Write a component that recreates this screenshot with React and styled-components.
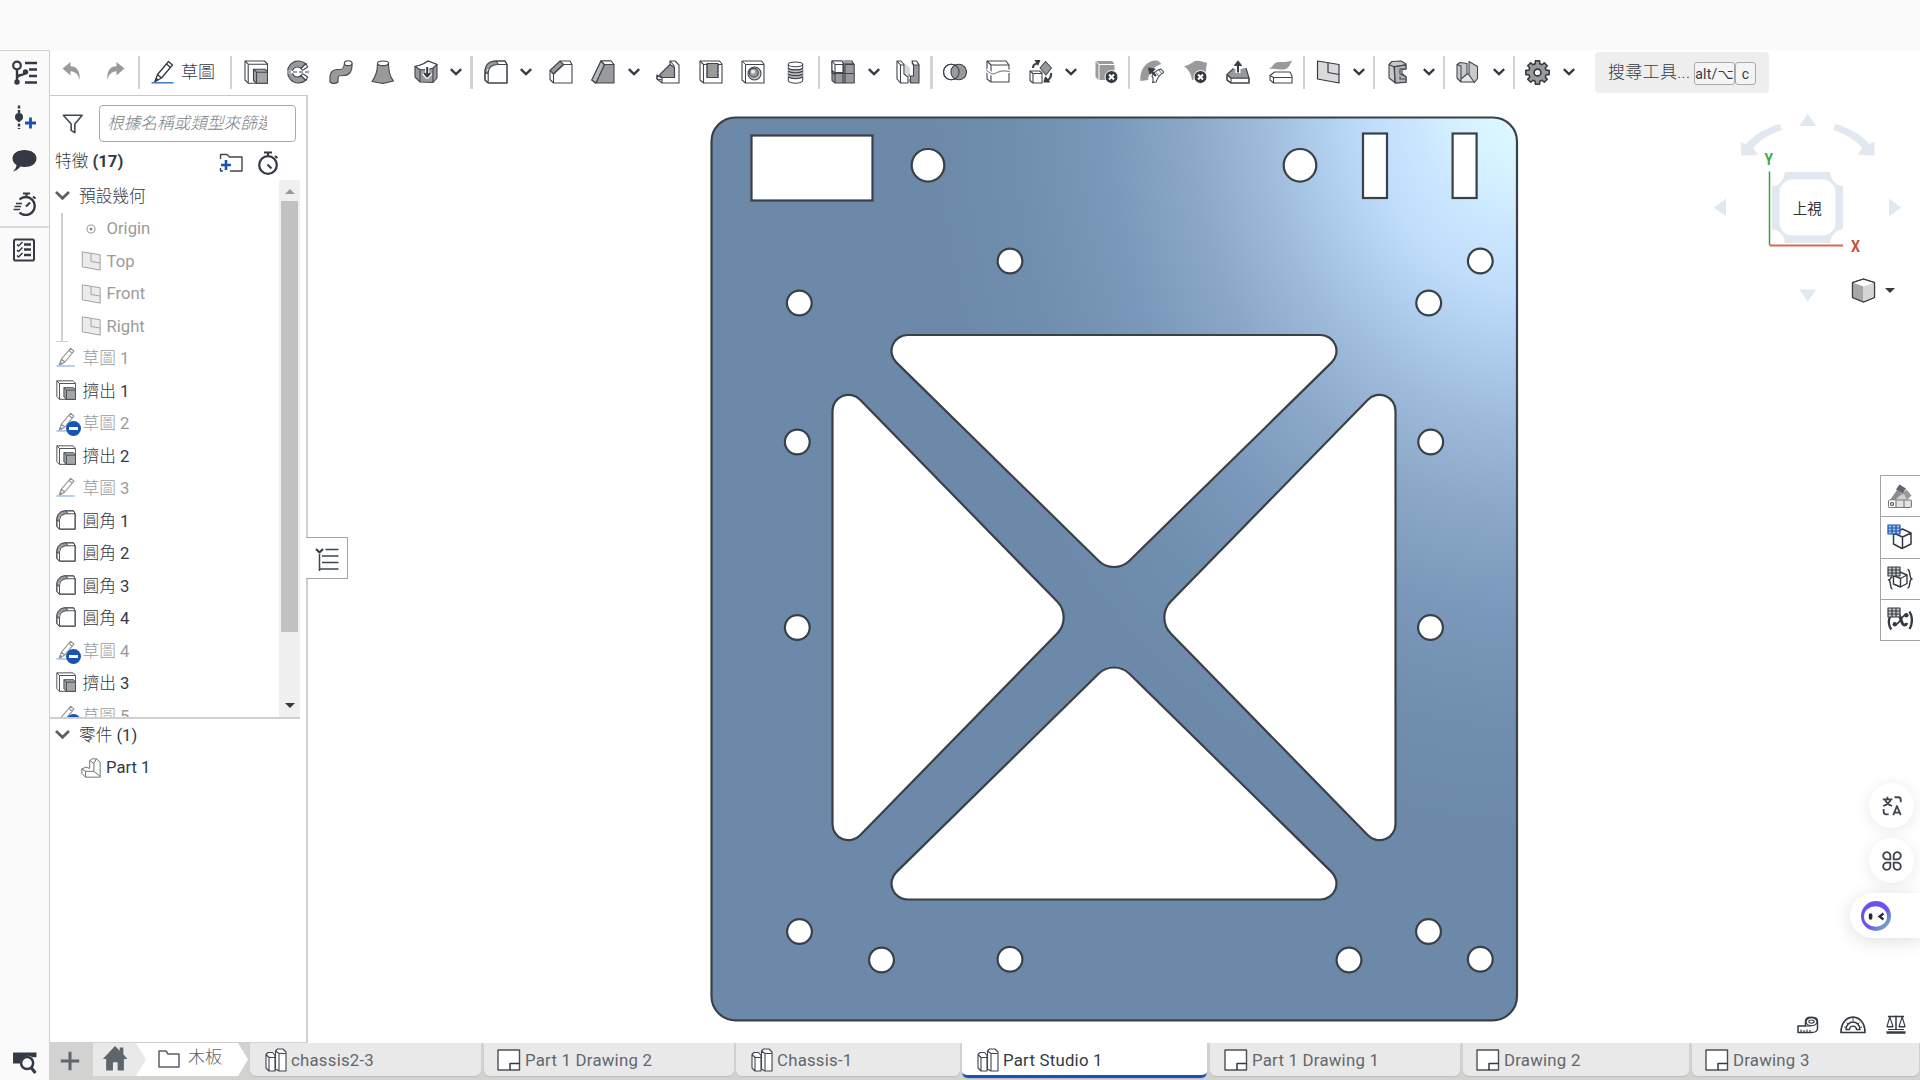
import React from "react";
import styled, { createGlobalStyle, css } from "styled-components";

const INK = "#333a44";
const MID = "#9a9a9a";
const LINE = "#d0d0d0";
const BLUE = "#1752b5";

const GlobalStyle = createGlobalStyle`
  * { box-sizing: border-box; }
  html, body, #root { height: 100%; }
  body {
    margin: 0;
    overflow: hidden;
    background: #fff;
    color: ${INK};
    font-family: Roboto, "Noto Sans CJK TC", sans-serif;
    font-size: 16.67px;
    font-weight: 400;
  }
`;

/* ---------- layout ---------- */

const Page = styled.div`
  display: flex;
  flex-direction: column;
  width: 1920px;
  height: 1080px;
  overflow: hidden;
`;

const TopStrip = styled.div`
  flex: none;
  height: 50px;
  background: #fafafa;
`;

const Body = styled.div`
  display: flex;
  flex: 1;
  min-height: 0;
`;

const Rail = styled.nav`
  display: flex;
  flex-direction: column;
  flex: none;
  width: 50px;
  border-top: 1px solid ${LINE};
  border-right: 1px solid ${LINE};
  background: #fafafa;
`;

const RailButton = styled.div`
  display: flex;
  align-items: center;
  justify-content: center;
  height: ${(p) => p.$h || 44}px;
  padding-right: ${(p) => p.$shift || 0}px;
  padding-bottom: 1px;
  margin-top: ${(p) => p.$push || "0"};
`;

const RailRule = styled.div`
  height: 2px;
  background: #dcdcdc;
`;

const Main = styled.div`
  display: flex;
  flex-direction: column;
  flex: 1;
  min-width: 0;
`;

const Toolbar = styled.div`
  display: flex;
  align-items: center;
  flex: none;
  height: 45px;
  padding-bottom: 1px;
`;

const Tool = styled.div`
  display: flex;
  flex: none;
  width: ${(p) => p.$w || 24}px;
  margin-left: ${(p) => p.$gap}px;
`;

const Divider = styled.div`
  flex: none;
  width: ${(p) => p.$w || 2}px;
  height: 33px;
  margin-left: ${(p) => p.$gap}px;
  background: #d3d3d3;
`;

const ToolLabel = styled.span`
  flex: none;
  width: 34px;
  margin-left: 6px;
  font-size: 17px;
  font-weight: 300;
  line-height: 24px;
  padding-bottom: 1px;
`;

const SearchBox = styled.div`
  display: flex;
  align-items: center;
  flex: none;
  width: 174px;
  height: 41px;
  margin-left: 20px;
  padding-left: 13px;
  border-radius: 4px;
  background: #eee;
  font-size: 17px;
  font-weight: 300;
`;

const SearchText = styled.span`
  width: 86px;
  white-space: nowrap;
  letter-spacing: 0.3px;
  line-height: 24px;
  padding-bottom: 1px;
`;

const Key = styled.kbd`
  display: flex;
  align-items: center;
  justify-content: center;
  width: ${(p) => p.$w}px;
  height: 23px;
  margin-top: 3px;
  border: 1px solid #aaa;
  border-radius: 3px;
  background: #f4f4f4;
  font-family: Roboto, "DejaVu Sans", sans-serif;
  font-size: 14px;
  font-weight: 400;
  letter-spacing: 0.2px;
`;

const Workspace = styled.div`
  display: flex;
  flex: 1;
  min-height: 0;
`;

const Panel = styled.aside`
  display: flex;
  flex-direction: column;
  flex: none;
  width: 258px;
  border-top: 1px solid #c8c8c8;
  border-right: 2px solid ${LINE};
  border-bottom: 1px solid ${LINE};
`;

const FilterRow = styled.div`
  display: flex;
  align-items: center;
  height: 47px;
  margin-top: 4px;
  padding-left: 12px;
  gap: 15px;
`;

const FilterInput = styled.div`
  width: 197px;
  height: 37px;
  padding: 0 28px 0 7px;
  border: 1px solid #a9a9a9;
  border-radius: 4px;
`;

const Placeholder = styled.div`
  overflow: hidden;
  white-space: nowrap;
  color: #7b7f85;
  font-style: italic;
  font-weight: 300;
  line-height: 35px;
`;

const HeadRow = styled.div`
  display: flex;
  align-items: center;
  height: 33px;
  padding: 0 26px 2px 5px;
  font-weight: 700;
`;

const HeadTitle = styled.span`
  flex: 1;
  line-height: 30px;
  padding-bottom: 2px;
  & > span { font-weight: 300; }
`;

const HeadIcon = styled.span`
  display: flex;
  margin-left: ${(p) => p.$gap || 0}px;
`;

const TreeArea = styled.div`
  display: flex;
  flex: none;
  width: 250px;
  height: 539px;
  border-bottom: 2px solid ${LINE};
`;

const TreeList = styled.div`
  flex: 1;
  overflow: hidden;
`;

const Group = styled.div`
  height: 129.5px;
  margin-left: 11px;
  border-left: 2px solid ${LINE};
  position: relative;
  &::after {
    content: "";
    position: absolute;
    left: -7px;
    bottom: 0;
    width: 12px;
    height: 1px;
    background: ${LINE};
  }
`;

const Row = styled.div`
  display: flex;
  align-items: center;
  height: 32.5px;
  padding-left: ${(p) => p.$indent || 5.5}px;
  padding-bottom: ${(p) => (p.$latin ? 0 : 2)}px;
  gap: ${(p) => p.$gap || 6}px;
  color: ${(p) => (p.$dim ? "#9b9b9b" : INK)};
  font-weight: ${(p) => (p.$latin ? 400 : 300)};
  white-space: nowrap;
`;

const Digits = styled.span`
  font-weight: 400;
`;

const IconSlot = styled.span`
  display: flex;
  align-items: center;
  justify-content: center;
  position: relative;
  width: 21px;
  height: 22px;
`;

const Minus = styled.span`
  position: absolute;
  left: 10px;
  top: 10px;
  width: 15px;
  height: 15px;
  border-radius: 50%;
  background: ${BLUE};
  &::after {
    content: "";
    position: absolute;
    left: 3px;
    top: 6px;
    width: 9px;
    height: 3px;
    background: #fff;
  }
`;

const ScrollTrack = styled.div`
  display: flex;
  flex-direction: column;
  align-items: center;
  width: 21px;
  background: #f0f0f0;
`;

const ScrollThumb = styled.div`
  width: 17px;
  height: 431px;
  background: #c1c1c1;
`;

const Arrow = styled.div`
  width: 0;
  height: 0;
  border-left: 5px solid transparent;
  border-right: 5px solid transparent;
  ${(p) =>
    p.$up
      ? css`margin: 9px 0 7px; border-bottom: 5px solid #9a9a9a;`
      : css`margin-top: ${p.$mt || 0}px; border-top: 5px solid ${INK};`}
`;

const PartsArea = styled.div`
  flex: 1;
`;

const Viewport = styled.main`
  position: relative;
  flex: 1;
  min-width: 0;
  margin-top: 1px;
`;

const ModelSvg = styled.svg`
  display: block;
`;

const Flyout = styled.div`
  position: absolute;
  left: -2px;
  top: 441px;
  display: flex;
  align-items: center;
  justify-content: center;
  width: 42px;
  height: 42px;
  padding: 1px 0 0 0;
  border: 1px solid #a3a3a3;
  border-left: none;
  background: #fff;
`;

const CubeWrap = styled.div`
  position: absolute;
  right: 10px;
  top: 10px;
`;

const SideDock = styled.div`
  position: absolute;
  right: 0;
  top: 379px;
  width: 40px;
  border: 1px solid #a3a3a3;
  border-right: none;
  background: #fff;
`;

const DockButton = styled.div`
  display: flex;
  align-items: center;
  padding-left: 6px;
  height: 41.25px;
  &:first-child { height: 40.25px; }
  & + & { border-top: 1px solid #a3a3a3; }
`;

const FloatStack = styled.div`
  position: absolute;
  right: 0;
  top: 687px;
  display: flex;
  flex-direction: column;
  align-items: flex-end;
`;

const RoundButton = styled.div`
  display: flex;
  align-items: center;
  justify-content: center;
  width: 45px;
  height: 45px;
  margin: 0 6px 10px 0;
  border-radius: 50%;
  background: #fff;
  box-shadow: 0 2px 16px rgba(0, 0, 0, 0.09);
`;

const Pill = styled.div`
  display: flex;
  align-items: center;
  width: 70px;
  height: 45px;
  padding-left: 11px;
  border-radius: 23px 0 0 23px;
  background: #fff;
  box-shadow: 0 3px 18px rgba(0, 0, 0, 0.13);
`;

const Measures = styled.div`
  position: absolute;
  right: 14px;
  bottom: 9px;
  display: flex;
  gap: 20.5px;
  align-items: center;
`;

const TabBar = styled.footer`
  display: flex;
  flex: none;
  height: 37px;
  background: #d2d2d1;
`;

const AddTab = styled.div`
  display: flex;
  align-items: center;
  justify-content: center;
  width: 43px;
  padding: 0 3px 1px 0;
`;

const Crumb = styled.div`
  display: flex;
  align-items: center;
  height: 33px;
  width: ${(p) => p.$w}px;
  margin-left: ${(p) => p.$ml || 0}px;
  padding-left: ${(p) => p.$pl}px;
  padding-bottom: 2px;
  gap: 8px;
  background: ${(p) => p.$bg};
  clip-path: ${(p) =>
    p.$notch
      ? "polygon(0 0, calc(100% - 10px) 0, 100% 50%, calc(100% - 10px) 100%, 0 100%, 10px 50%)"
      : "polygon(0 0, 100% 0, 100% 100%, 0 100%)"};
  color: #5b6068;
  font-size: 17px;
  font-weight: 300;
`;

const CrumbText = styled.span`
  line-height: 24px;
  padding-bottom: 3px;
`;

const Tab = styled.div`
  display: flex;
  align-items: center;
  flex: none;
  width: ${(p) => p.$w}px;
  height: ${(p) => (p.$active ? 35 : 33)}px;
  margin-left: ${(p) => p.$gap}px;
  padding-left: ${(p) => p.$pl || 13}px;
  padding-top: ${(p) => (p.$active ? 1 : 0)}px;
  gap: 4px;
  border-radius: 0 0 6px 6px;
  border-bottom: ${(p) => (p.$active ? `3px solid ${BLUE}` : "none")};
  background: ${(p) => (p.$active ? "#fff" : "#e9e9e9")};
  box-shadow: 0 1px 1px #bdbdbd;
  color: ${(p) => (p.$active ? INK : "#62676d")};
  font-size: 16.8px;
  letter-spacing: 0.23px;
  white-space: nowrap;
`;

const TabText = styled.span`
  padding-top: 1px;
`;

/* ---------- icons ---------- */

const Svg = ({ s = 24, h, vb = "0 0 24 24", children }) => (
  <svg
    width={s}
    height={h || s}
    viewBox={vb}
    fill="none"
    stroke="#3f4650"
    strokeWidth="1.1"
    strokeLinejoin="round"
    style={{ display: "block", flex: "none" }}
  >
    {children}
  </svg>
);

const Undo = () => (
  <Svg>
    <path d="M2.5 8.5 10.5 2v4.3c6.500 0 9.500 4.500 9.300 13.700C18 14.500 15.500 11.500 10.500 11.300V15.500z" fill={MID} stroke="none" />
  </Svg>
);
const Redo = () => (
  <Svg>
    <path d="M20.500 8.500 12.500 2v4.300C6 6.300 3 10.800 3.200 20 5 14.500 7.500 11.500 12.500 11.300V15.500z" fill={MID} stroke="none" />
  </Svg>
);
const Sketch = ({ s, dim }) => (
  <Svg s={s}>
    <g stroke={dim ? "#909090" : INK} strokeWidth="1.3">
      <path d="M4 21.500 6.500 14.500 17.500 1.500 21.500 5 10.500 18z M6.500 14.500l4 3.500 M15.500 4l4 3.500" fill="#fff" />
      <path d="M4 21.500l3-1.500-1.700-1.500z" fill={dim ? "#909090" : INK} />
    </g>
    <path d="M.5 22.800H22.500" stroke={dim ? "#8fb4dc" : "#3f78bd"} strokeWidth="1.500" />
  </Svg>
);
const Extrude = ({ s }) => (
  <Svg s={s}>
    <path d="M1 1H20.500L23.500 4V23.200H4.200L1 20z" fill="#fff" />
    <path d="M1 1l3.200 3.200H23.500M4.200 4.200V23.200" />
    <path d="M9.500 9.200H21l2.500 2.500V23.200H12.500L9.500 20.500z" fill="#a6a6a6" />
    <path d="M9.500 9.200l3 3H23.500M12.500 12.200V23.200" />
  </Svg>
);
const Revolve = () => (
  <Svg>
    <path d="M19.500 3.500A11 11 0 1 0 19.500 20.500L15 15.500A5 5 0 1 1 15 8.500z" fill={MID} />
    <path d="M15 8.500l5-5 1.500 3.500-5 3.500zM15 15.500l5 5 1.500-3.500-5-3.500z" fill="#fff" />
    <path d="M1 12H23.500" stroke="#fff" strokeWidth="2.600" />
    <path d="M1 12H23.500" strokeDasharray="4 2" />
  </Svg>
);
const Sweep = () => (
  <Svg>
    <path d="M1 18c0-7 4-9 9-8.500 4 .3 5-2 5.500-6.500l7.500.5c.5 7-2 12-8.500 12-4.500 0-5 0-5.500 3v3.500c-2 2-6 2-8 0z" fill={MID} />
    <ellipse cx="19.200" cy="3.200" rx="3.800" ry="2.400" fill="#fff" />
  </Svg>
);
const Loft = () => (
  <Svg>
    <path d="M6.500 3.500C6.500 12 4.500 17 1 21.500L12 23.500 22.500 21C19 17 17.500 11 17.500 3.500z" fill={MID} />
    <ellipse cx="12" cy="3.300" rx="5.500" ry="2.300" fill="#fff" />
  </Svg>
);
const Thicken = () => (
  <Svg>
    <path d="M1 6.500C6 5.500 11 3.500 14 1l9 3.500V18L19 22.500 6 22 1 17z" fill={MID} />
    <path d="M1 6.500C6 5.500 11 3.500 14 1l9 3.500-4 3.500C14 10 10 10 6 9.500z" fill="#fff" />
    <path d="M6 9.500V22M19 8V22.500" />
    <path d="M13.200 8v8.500M9.500 12.800l3.700 4 3.700-4" stroke="#fff" strokeWidth="4" />
    <path d="M13.200 7v9M10 12.800l3.200 3.700 3.200-3.700" strokeWidth="2" stroke={INK} />
  </Svg>
);
const Fillet = ({ s }) => (
  <Svg s={s}>
    <path d="M12 1h9l2 3.500V23H4.200L1 20V12C1 5 5 1 12 1z" fill="#fff" />
    <path d="M1 12C1 5 5 1 12 1l2.500 3.500C8 4.500 4.200 7 4.200 14z" fill={MID} stroke="none" />
    <path d="M3.500 9.500l3 2" stroke="#fff" strokeWidth="2" />
    <path d="M12 1C5 1 1 5 1 12v8l3.200 3H23V4.500L21 1zM4.200 23V14C4.200 7 8 4.500 14.500 4.500H23M12 1l2.500 3.500M1 12l3.200 2" />
  </Svg>
);
const Chamfer = () => (
  <Svg>
    <path d="M1 10.500 11 1l3.500 3.500L4.500 14z" fill={MID} />
    <path d="M11 1h10l2 3.500V23H4.500L1 19.500V10.500M4.500 23V14l10-9.500H23" />
  </Svg>
);
const Draft = () => (
  <Svg>
    <path d="M10 1H20l3 3.500V23H4.500L.8 20z" fill={MID} />
    <path d="M10 1l3.500 3.500L5 23 .8 20z" fill="#b8b8b8" />
    <path d="M10 1H20l3 3.500H13.500z" fill="#fff" />
    <path d="M13.500 4.500 5 23" strokeDasharray="2 1.500" />
  </Svg>
);
const Rib = () => (
  <Svg>
    <path d="M1 15l4 2.500h3L18 8V5.500L14 1h5l4 4V23H6l-5-4z" fill="#fff" />
    <path d="M3.500 15 14 4.500l4.500 3V17.500H6z" fill={MID} />
    <path d="M14 1v4M1 15v4l5 1M6 17.500V23M18.500 7.500V17.500" />
  </Svg>
);
const Shell = () => (
  <Svg>
    <path d="M1 1H20.500L23 4V23H4.500L1 20z" fill="#fff" />
    <path d="M1 1l3.500 3.500V23M4.500 4.500H23" />
    <path d="M8 3.500H19V17.500H8z" fill={MID} />
    <path d="M8 3.500V17.500H19V3.500" strokeDasharray="2 1" />
  </Svg>
);
const Hole = () => (
  <Svg>
    <path d="M1 1H20.500L23 4V23H4.500L1 20z" fill="#fff" />
    <path d="M1 1l3.500 3.500V23M4.500 4.500H23" strokeWidth="1" />
    <circle cx="13.500" cy="13.500" r="6.500" fill="#c9c9c9" />
    <circle cx="12.800" cy="12.800" r="4.500" fill={MID} />
    <circle cx="12" cy="11.800" r="2" fill="#eee" stroke="none" />
  </Svg>
);
const Thread = () => (
  <Svg s={23}>
    <path d="M4.500 3.500v17c2 3.500 13 3.500 15 0v-17" fill="#fff" />
    <path d="M4.500 8v8.500c2 3 13 3 15 0V8z" fill="#c4c4c4" stroke="none" />
    <ellipse cx="12" cy="3.500" rx="7.500" ry="2.500" fill="#fff" />
    <path d="M4.500 7.500c3 2.500 12 2.500 15 0M4.500 10.500c3 2.500 12 2.500 15 0M4.500 13.500c3 2.500 12 2.500 15 0M4.500 16.500c3 2.500 12 2.500 15 0" strokeWidth="1.300" />
  </Svg>
);
const Pattern = () => (
  <Svg>
    <path d="M1 1H10.500l2 2H21.500l1.700 2.500V23H4L1 20.500z" fill={MID} />
    <path d="M1 1h10l1.500 3v8.500H3.500L1 10.500z" fill="#fff" />
    <path d="M1 1l3 3.500h8.500M4 4.500V12M12.500 1H21l2.200 3.500H14V23M1 10.500V13l3 .5h19M4 13V23M1 13l3 1.500M12 4V23" />
  </Svg>
);
const Mirror = () => (
  <Svg>
    <path d="M1 1h4l3 3.500V14l4 3V23H4.500L1 19z" fill="#fff" />
    <path d="M1 1l3.500 4V23M4.500 5H8" />
    <path d="M7 1l7 7v9l-5-3.500V4z" fill="#d9d9d9" stroke="none" />
    <path d="M16 3h5.500L23 5V23H14.500V16H17.500V5z" fill={MID} />
    <path d="M16 1h4.500L23 5h-5.500z" fill="#fff" />
    <path d="M13.200 14V24" strokeDasharray="3 2" stroke="#777" />
  </Svg>
);
const Boolean_ = () => (
  <Svg>
    <circle cx="8.300" cy="12" r="7.800" fill="#fff" />
    <circle cx="15.700" cy="12" r="7.800" fill={MID} />
    <circle cx="8.300" cy="12" r="7.800" />
  </Svg>
);
const Split = () => (
  <Svg>
    <path d="M1 1H20l3 4V22H5l-4-3z" fill="#fff" />
    <path d="M1 1l4 4H23M5 5V22" />
    <path d="M0 9.500c4 5 8 5 11 3 4-2.500 8-2 13-1" stroke="#fff" strokeWidth="3.500" />
    <path d="M0 9.500c4 5 8 5 11 3 4-2.500 8-2 13-1" stroke="#888" />
  </Svg>
);
const Transform = () => (
  <Svg>
    <path d="M1 11h9.500l2.500 2V23H4l-3-2.500z" fill="#fff" />
    <path d="M1 11l3 2.500h9M4 13.500V23" />
    <path d="M16.500 1.500 22.500 8 17 15 11 8z" fill={MID} />
    <path d="M4 8C4 5 5 4 8 3.500" strokeWidth="2.200" />
    <path d="M5.500 0h6L9 6z" fill={INK} stroke="none" />
    <path d="M22 13c.5 4-1 6-4 7.500" strokeWidth="2.200" />
    <path d="M15 22l1.500-5 4 5z" fill={INK} stroke={INK} />
  </Svg>
);
const CrossBadge = () => (
  <g>
    <circle cx="16.500" cy="17" r="6.500" fill={INK} stroke="#fff" strokeWidth="1" />
    <path d="M14 14.500l5 5M19 14.500l-5 5" stroke="#fff" strokeWidth="2" />
  </g>
);
const DeletePart = () => (
  <Svg>
    <path d="M.5 1H17l2.500 3V20H3.500L.5 17z" fill={MID} stroke="none" />
    <path d="M.5 1l3.500 3.500H20M4 4.500V21" stroke="#fff" strokeWidth="1" />
    <CrossBadge />
  </Svg>
);
const ModifyFillet = () => (
  <Svg>
    <path d="M.5 21C-1 9 8-1 18 .8L21.500 4C14 6 9 12 8 20z" fill={MID} stroke="none" />
    <path d="M12 16c2-4 5-6 9-7l3 3.500c-4 1.500-6 4-8 9.500l-3.500.5c1-2 1-4-.5-6.500z" fill="#fff" />
    <path d="M16 12.500l3 4M19 10l3 4" strokeWidth=".8" />
    <path d="M16 16 11 11" strokeWidth="2.200" stroke={INK} />
    <path d="M8.500 8l6.500 1-5 5z" fill={INK} />
  </Svg>
);
const DeleteFace = () => (
  <Svg>
    <path d="M0 6C5 6 8 2 12 .8c4-.5 7 1 11 2L21 16 8 20C7 13 4 9 0 6z" fill={MID} stroke="none" />
    <CrossBadge />
  </Svg>
);
const MoveFace = () => (
  <Svg>
    <path d="M1 14.500 5 18H23V23H5l-4-3z" fill="#fff" />
    <path d="M1 14.500 7.500 8.500C11 10.500 16 8 20 8l3 8.500-3 1.500H5z" fill={MID} stroke="none" />
    <path d="M7.500 8.500 1 14.500 5 18H23L20 8M1 14.500V20l4 3V18M5 23H23V18" />
    <path d="M12 13V3.500" stroke="#fff" strokeWidth="5" />
    <path d="M12 12.500V3" strokeWidth="2" stroke={INK} />
    <path d="M8.500 5.500 12 1l3.500 4.500z" fill={INK} />
  </Svg>
);
const ReplaceFace = () => (
  <Svg>
    <path d="M0 9C4 7 4 3 9 2c5 0 8 .5 14-1.500-2 4-3 8-8 9C10 10 6 8 0 9z" fill={MID} stroke="none" />
    <path d="M1 15.500 5.500 12H21l2 4V23H4.500L1 20z" fill="#fff" />
    <path d="M1 15.500 4.500 17.500H23M4.500 17.500V23" />
  </Svg>
);
const Plane = ({ s, dim }) => (
  <Svg s={s}>
    <g stroke={dim ? "#9b9b9b" : INK} strokeWidth={dim ? 1.1 : 1.2}>
      <path d="M1.500 1 23 4.500V23L1.500 19z" fill={dim ? "#ebebeb" : "#dadada"} />
      <path d="M12 3V12.500L23 14.500" />
    </g>
  </Svg>
);
const Frame = () => (
  <Svg>
    <path d="M3 4.500 6 1.500 15 1l5 3V9l-4 .5v4L20 17v5.500L9.500 23 3 18z" fill="#c9c9c9" />
    <path d="M8 6.500 20 5V9h-6v5l6 2.500V22L9 23z" fill="#b3b3b3" />
    <path d="M3 4.500 8.500 7 20 4.500M8.500 7 9 23M14 16.500V19H20" />
  </Svg>
);
const SheetMetal = () => (
  <Svg>
    <path d="M2 4.500 5 2.500l7 1V14L23 12V18l-3.500 4.500L6 22 2 18z" fill="#c9c9c9" stroke="none" />
    <path d="M12 14 6 18.500V22H19.500V18z" fill="#e6e6e6" stroke="none" />
    <path d="M14 1.500 22.500 6.500V18.500L19.500 22.500 14 15z" fill="#c9c9c9" />
    <path d="M2 4.500 5 2.500l7 1V14L6 19V6zM2 4.500V18L6 22H19.500M6 19v3M12 14h2" />
  </Svg>
);
const Gear = () => {
  const pts = [];
  for (let i = 0; i < 8; i++) {
    const a = (i * Math.PI) / 4;
    [[-0.26, 8.6], [-0.18, 11.4], [0.18, 11.4], [0.26, 8.6]].forEach(([d, r]) =>
      pts.push(`${(12 + Math.sin(a + d) * r).toFixed(2)},${(12 - Math.cos(a + d) * r).toFixed(2)}`)
    );
  }
  return (
    <Svg s={25}>
      <polygon points={pts.join(" ")} fill={MID} strokeWidth="1.500" stroke={INK} />
      <circle cx="12" cy="12" r="3.300" fill="#fff" strokeWidth="1.600" stroke={INK} />
    </Svg>
  );
};
const ChevronIcon = ({ w = 12, c = INK, sw = 2.4 }) => (
  <svg width={w} height={w} viewBox="0 0 12 12" fill="none" stroke={c} strokeWidth={sw} style={{ display: "block", flex: "none" }}>
    <path d="M.8 3.200 6 8.200 11.200 3.200" />
  </svg>
);
const TreeIcon = () => (
  <Svg s={26} vb="0 0 26 26">
    <g strokeWidth="2.200" stroke={INK}>
      <circle cx="5" cy="5.500" r="3.800" />
      <path d="M5 9.500V20M5 18c0-5 8-1 8.500-6" strokeWidth="2.400" />
      <path d="M13 3H25M17 9.500h8M17 16h8M13 22.500H25" strokeWidth="2.400" />
    </g>
    <circle cx="5" cy="22" r="2.700" fill={INK} stroke="none" />
    <circle cx="13.500" cy="12" r="2.700" fill={INK} stroke="none" />
  </Svg>
);
const InsertPoint = () => (
  <Svg>
    <path d="M6 .5V24" strokeWidth="2.400" strokeDasharray="3 1.500" stroke={INK} />
    <circle cx="6" cy="12" r="4" fill={INK} stroke="none" />
    <path d="M17.500 12.500v11M12 18H23" stroke={BLUE} strokeWidth="2.800" />
  </Svg>
);
const Comment = () => (
  <Svg s={25} h={22} vb="0 0 25 22">
    <path d="M12.500 0C19.500 0 24.500 3.500 24.500 8.500S19.500 17 12.500 17c-1.500 0-3 0-4-.4C6.500 19 4 21 .8 21.500 3 19.500 4.300 17.500 4.500 15 2 13.500.5 11.300.5 8.500.5 3.500 5.500 0 12.500 0z" fill={INK} stroke="none" />
  </Svg>
);
const FastWatch = () => (
  <Svg>
    <g stroke={INK}>
      <path d="M6.500 7.500A9 9 0 1 1 6.500 20.500" strokeWidth="2.400" />
      <path d="M10 1.500h7M13.500 1.500V5M20 4.500l2.500 2M13 14.500l4-4" strokeWidth="2" />
      <path d="M3 11.500H9M1.500 14.500H8M.5 17.500H7" strokeWidth="1.400" />
    </g>
  </Svg>
);
const Watch = () => (
  <Svg>
    <g stroke={INK}>
      <circle cx="12" cy="14" r="8.800" strokeWidth="2.300" />
      <path d="M8 1.500h8M12 1.500V5M19 5l2.500 2M11.500 13.500l4 4" strokeWidth="2" />
    </g>
  </Svg>
);
const Checklist = () => (
  <Svg>
    <g stroke={INK}>
      <rect x="2" y="1.500" width="20" height="21" rx="1.500" strokeWidth="2" />
      <path d="M12 6.500h7M12 11.500h7M12 17h7" strokeWidth="2.400" />
      <path d="M5 6.500l1.500 1.500 4-4M5 12l1.500 1.500 4-4M5 17.500 6.500 19l4-4" strokeWidth="1.500" />
    </g>
  </Svg>
);
const ScreenSearch = () => (
  <Svg s={25}>
    <path d="M1 2.500H23.500V7H20A8 8 0 0 0 7.500 13H1z" fill={INK} stroke="none" />
    <circle cx="14.500" cy="12.500" r="5.800" strokeWidth="2.400" fill="#fafafa" stroke={INK} />
    <path d="M18.500 17l4 5" strokeWidth="3" stroke={INK} />
  </Svg>
);
const Funnel = () => (
  <Svg s={22}>
    <path d="M1.500 2.500H22L14 12v9.500L10 19V12z" strokeWidth="1.700" />
  </Svg>
);
const FolderPlus = () => (
  <Svg s={24} h={22} vb="0 0 24 22">
    <path d="M1.500 7V2.500H8l2.500 2.500H23V19H11M4 19H1.500V16" strokeWidth="1.400" />
    <path d="M7 8v10M2 13H12" stroke={BLUE} strokeWidth="2.600" />
  </Svg>
);
const OriginIcon = () => (
  <Svg s={18} vb="0 0 18 18">
    <circle cx="9" cy="9" r="4" stroke="#9b9b9b" />
    <circle cx="9" cy="9" r="1.500" fill="#8b8b8b" stroke="none" />
  </Svg>
);
const PartIcon = () => (
  <Svg s={20}>
    <g stroke="#62676d">
      <path d="M10.500 3 13.500 1H18.500L23 5V23H5.500L1 18.500V13L6 11l4.500 1.500z" fill="#fff" />
      <path d="M10.500 3 15.500 6.500V16H5.500V23M1 13l4.500 3M15.500 6.500 18.500 1M15.500 16 23 22" />
    </g>
  </Svg>
);
const FlyIcon = () => (
  <Svg s={24}>
    <path d="M1 2l3.500 3.500L8 2" strokeWidth="2" stroke={INK} />
    <path d="M10.500 2.500h13M7 9h16.500M7 15.500h16.500M5 22h18.500M4.500 7V24" strokeWidth="1.500" />
  </Svg>
);
const Plus = () => (
  <Svg s={20} vb="0 0 20 20">
    <path d="M10 .8V19.200M.8 10H19.200" stroke="#5f656c" strokeWidth="3" />
  </Svg>
);
const Home = () => (
  <Svg s={25}>
    <path d="M.8 12.500 12.500 0 17 4.500V1.500h3.500V8l4 4.500H21V23.500H15V15.500h-4.500v8H4V12.500z" fill="#5f656c" stroke="none" />
  </Svg>
);
const Folder = () => (
  <Svg s={22} h={18} vb="0 0 22 18">
    <path d="M1 17V1H8L10 4H21V17z" stroke="#5b6068" strokeWidth="1.500" />
  </Svg>
);
const StudioIcon = () => (
  <Svg s={22} h={24} vb="0 0 22 24">
    <path d="M1 6.500 3 4.500h4.500l2.500 3V23H4l-3-3zM1 6.500l3 3h6M4 9.500V23" fill="#fff" />
    <path d="M10.500 3l2-2H18l3 3V23H14l-3.500-2zM10.500 3 14 5.500h7M14 5.500V23" fill="#fff" />
  </Svg>
);
const DrawingIcon = () => (
  <Svg s={24} h={22} vb="0 0 24 22">
    <rect x="1" y="1" width="21.500" height="20" fill="#fff" stroke="#4b5158" strokeWidth="1.400" />
    <path d="M13 21v-6.500h9.500" stroke={INK} strokeWidth="1.500" />
  </Svg>
);
const Grid = ({ c, f }) => (
  <g stroke={c} strokeWidth="1.200">
    <rect x="1" y="1" width="12" height="9" fill={f} />
    <path d="M1 4h12M1 7h12M5 1v9M9 1v9" />
  </g>
);
const Swatches = () => (
  <Svg s={26} vb="0 0 26 26">
    <path d="M8 17 19.500 6.500 24.500 12.500 20 17z" fill="#999" stroke="none" />
    <path d="M3 17 17 11l3 6z" fill="#d0d0d0" stroke="none" />
    <path d="M3 17 10 7l5 3.500L8 17z" fill="#8b8b8b" stroke="none" />
    <path d="M9 6.500 12.500 1.500 19 5.500 15.500 10.500z" fill="#5f656c" stroke="none" />
    <rect x="1.500" y="17" width="23" height="7.500" rx="1.500" fill="#e2e2e2" stroke="#777" />
    <rect x="2" y="17.500" width="6.500" height="6.500" fill="#fff" stroke="none" />
    <path d="M9 17v7.500M17 17v7.500" stroke="#777" />
    <circle cx="5" cy="21" r="1.500" />
  </Svg>
);
const GridCube = () => (
  <Svg s={26} vb="0 0 26 26">
    <path d="M6.500 9 15.500 5 24 9v11l-9 4.500L6.500 20zM6.500 9l9 4L24 9M15.500 13v11.500" strokeWidth="1.500" stroke={INK} />
    <Grid c={BLUE} f="#a9c2ea" />
  </Svg>
);
const GridBraceCube = () => (
  <Svg s={26} vb="0 0 26 26">
    <g stroke={INK}>
      <path d="M6.500 9.500 13 6l7 3v8.500L13.500 21 6.500 18zM6.500 9.500l7 3 6.500-3.500M13.500 12.500V21" strokeWidth="1.400" />
      <path d="M5.500 11c-3 0-1 3-4 3 3 0 1 9 4 9M20.500 3.500c3.500 0 1 8 4.500 9.500-3.500 0-1 9-4.500 9" strokeWidth="1.500" />
    </g>
    <Grid c={INK} f="#ccc" />
  </Svg>
);
const GridVar = () => (
  <Svg s={26} vb="0 0 26 26">
    <g stroke={INK}>
      <path d="M3.500 9c-2.500 4-2 10 .8 13.500M22.500 4.500c3.200 5 3.200 12.500 0 17.500" strokeWidth="2.300" />
      <path d="M10.500 8.500c4-1.500 3 9.500 7 9.500 1.200 0 2-.8 2.500-2" strokeWidth="3" />
      <path d="M19.500 7.500C15 7 12.500 18.500 7.500 18" strokeWidth="1.600" />
    </g>
    <circle cx="19.300" cy="8.200" r="2.200" fill={INK} stroke="none" />
    <circle cx="7.800" cy="17.300" r="2.200" fill={INK} stroke="none" />
    <Grid c={INK} f="#ccc" />
  </Svg>
);
const Translate = () => (
  <Svg s={20}>
    <g stroke="#40464f" strokeWidth="2.200">
      <path d="M1 4H12.500M6.500 1v3M1.500 12c4.500-1.500 7.500-4 9-8M3.500 4C5 8 8 10.500 12 12" />
      <path d="M13.500 23 18 12l4.500 11M15 20h6" />
      <path d="M15 1.500h4.500q3 0 3 3V7.500M2 15.500V19q0 3 3 3H8" />
    </g>
  </Svg>
);
const Clover = () => (
  <Svg s={20}>
    <g stroke="#40464f" strokeWidth="2.200">
      <path d="M10 10H6a4.300 4.300 0 1 1 4-4zM14 10V6a4.300 4.300 0 1 1 4 4zM10 14v4a4.300 4.300 0 1 1-4-4zM14 14h4a4.300 4.300 0 1 1-4 4z" />
    </g>
  </Svg>
);
const Bot = () => (
  <svg width="30" height="30" viewBox="0 0 30 30">
    <defs>
      <linearGradient id="bot" x1="0" y1="0" x2="1" y2="1">
        <stop offset="0.550" stopColor="#6a51f0" />
        <stop offset="0.800" stopColor="#6f9bc4" />
      </linearGradient>
    </defs>
    <circle cx="15" cy="15" r="15" fill="url(#bot)" />
    <ellipse cx="14.500" cy="15.500" rx="11.500" ry="10.300" fill="#fff" />
    <rect x="7.800" y="12.300" width="3.600" height="6.500" rx="1.700" fill="#262b33" />
    <path d="M22.500 12.500 18.500 15.500 22.500 18.500" fill="none" stroke="#262b33" strokeWidth="2.200" />
  </svg>
);
const Tape = () => (
  <Svg s={22} h={18} vb="0 0 22 18">
    <g stroke={INK}>
      <path d="M1 10H8.500V5C9 0 20.500 0 20.500 5.500V13C20 16 17 16.500 14.500 16.500H1z" strokeWidth="1.500" />
      <ellipse cx="14.500" cy="5.800" rx="5.500" ry="4" />
      <ellipse cx="14.500" cy="5.600" rx="2.700" ry="1.600" />
      <path d="M4 13.500v3M7 14v2.500M10 13.500v3M13 14v2.500M8.500 10H14" />
    </g>
  </Svg>
);
const Protractor = () => (
  <Svg s={26} h={18} vb="0 0 26 18">
    <g stroke={INK}>
      <path d="M1 16.500C1 -4 25 -4 25 16.500z" strokeWidth="1.700" />
      <path d="M6 13.500C6.500 3.500 19.500 3.500 20 13.500H16.500C16 9 10 9 9.500 13.500z" strokeWidth="1.400" />
      <path d="M4 11l2 .5M6.500 6.500 8 8M13 2v3M19.500 6.500 18 8M22 11l-2 .5" strokeWidth=".9" />
    </g>
  </Svg>
);
const Scales = () => (
  <Svg s={20} h={19} vb="0 0 20 19">
    <g stroke={INK}>
      <path d="M2 1.500H18M10 .5V15" strokeWidth="1.500" />
      <path d="M3.800 2 1 11.500h6zM16.200 2 13 11.500h6z" />
      <path d="M1 12h6M13 12h6M2 14.500H18" strokeWidth="1.200" />
      <path d="M.5 17.500h19" strokeWidth="2.500" />
    </g>
  </Svg>
);

/* ---------- data ---------- */

const TOOLS = [
  [Undo, 10], [Redo, 20], ["|", 10], [Sketch, 11], ["label", 6], ["|", 15],
  [Extrude, 12], [Revolve, 18], [Sweep, 19], [Loft, 18], [Thicken, 19], ["v", 12], ["|", 8, 3],
  [Fillet, 11], ["v", 12], [Chamfer, 17], [Draft, 18], ["v", 13], [Rib, 16], [Shell, 19], [Hole, 18], [Thread, 19], ["|", 10],
  [Pattern, 11], ["v", 13], [Mirror, 16], ["|", 10, 3],
  [Boolean_, 10], [Split, 19], [Transform, 19], ["v", 12], [DeletePart, 18], ["|", 9],
  [ModifyFillet, 10], [DeleteFace, 20], [MoveFace, 18], [ReplaceFace, 19], ["|", 10],
  [Plane, 11], ["v", 13], ["|", 8], [Frame, 11], ["v", 13], ["|", 8],
  [SheetMetal, 10], ["v", 14], ["|", 8], [Gear, 10, 25], ["v", 13],
];

const FEATURES = [
  ["sketch", "草圖", 1], ["extrude", "擠出", 1], ["sketch", "草圖", 2, true], ["extrude", "擠出", 2],
  ["sketch", "草圖", 3], ["fillet", "圓角", 1], ["fillet", "圓角", 2], ["fillet", "圓角", 3],
  ["fillet", "圓角", 4], ["sketch", "草圖", 4, true], ["extrude", "擠出", 3], ["sketch", "草圖", 5, true],
];

const FEATURE_ICONS = { sketch: Sketch, extrude: Extrude, fillet: Fillet };

const TABS = [
  { name: "chassis2-3", kind: "studio", w: 231, gap: 2, pl: 15 },
  { name: "Part 1 Drawing 2", w: 250, gap: 3 },
  { name: "Chassis-1", kind: "studio", w: 224, gap: 2, pl: 15 },
  { name: "Part Studio 1", kind: "studio", w: 245, gap: 2, pl: 15, active: true },
  { name: "Part 1 Drawing 1", w: 250, gap: 3, pl: 14 },
  { name: "Drawing 2", w: 226, gap: 3, pl: 13 },
  { name: "Drawing 3", w: 227, gap: 3, pl: 13 },
];

const HOLES = [
  [928, 165.3, 16.3], [1300, 165.3, 16.3],
  [1010, 261, 12.4], [1480.3, 261, 12.4], [799.3, 303, 12.4], [1428.7, 303, 12.4],
  [797.3, 442, 12.4], [1430.7, 442, 12.4], [797.3, 627.5, 12.4], [1430.5, 627.5, 12.4],
  [799.5, 931.5, 12.4], [1428.5, 931.5, 12.4], [881.5, 960, 12.4], [1010, 959.3, 12.4],
  [1349, 960, 12.4], [1480.3, 959.3, 12.4],
];

const TRI_TOP = "M907.500 335H1320.500A16 16 0 0 1 1331.700 362.400L1129.400 560.700A22 22 0 0 1 1098.600 560.700L896.300 362.400A16 16 0 0 1 907.500 335Z";
const TRI_LEFT = "M832.500 411A16 16 0 0 1 860.100 399.800L1057.200 601.500A23 23 0 0 1 1057.200 633.500L860.100 835.200A16 16 0 0 1 832.500 824Z";

/* ---------- parts ---------- */

const Model = () => (
  <ModelSvg width="1612" height="947" viewBox="308 96 1612 947">
    <defs>
      <radialGradient id="shine" gradientUnits="userSpaceOnUse" cx="0" cy="0" r="1" gradientTransform="translate(1525 95) scale(600 740)">
        <stop offset="0" stopColor="#e0fcff" />
        <stop offset="0.110" stopColor="#d6f2ff" />
        <stop offset="0.180" stopColor="#cbe7ff" />
        <stop offset="0.260" stopColor="#c0ddfc" />
        <stop offset="0.340" stopColor="#b0ceed" />
        <stop offset="0.440" stopColor="#9ebbdb" />
        <stop offset="0.560" stopColor="#8ba8c9" />
        <stop offset="0.700" stopColor="#7a98b9" />
        <stop offset="0.850" stopColor="#708eae" />
        <stop offset="1" stopColor="#6c89a9" />
      </radialGradient>
    </defs>
    <g stroke="#3a4047" strokeWidth="2.2">
      <rect x="711.500" y="117.500" width="805.500" height="902.800" rx="24" fill="url(#shine)" />
      <g fill="#fff">
        <rect x="751.500" y="135.500" width="121" height="65" />
        <rect x="1363" y="133.500" width="24" height="64.500" />
        <rect x="1452.600" y="133.500" width="24" height="64.500" />
        {HOLES.map(([x, y, r]) => (
          <circle key={`${x}-${y}`} cx={x} cy={y} r={r} />
        ))}
        <path d={TRI_TOP} />
        <path d={TRI_TOP} transform="matrix(1 0 0 -1 0 1234.500)" />
        <path d={TRI_LEFT} />
        <path d={TRI_LEFT} transform="matrix(-1 0 0 1 2228 0)" />
      </g>
    </g>
  </ModelSvg>
);

const ViewCube = () => (
  <svg width="200" height="200" viewBox="1710 106 200 200" style={{ display: "block" }}>
    <g fill="#e1e8ef">
      <path d="M1807.700 114l8.500 12h-17zM1714 207.500l12-9v18zM1901 207.500l-12-9v18zM1807.700 301.500l8.500-12h-17z" />
      <path d="M1780 124l2 6c-12 4-22 10-29 18l5 7-17 .5V142l5 2c9-10 20-16 34-20z" />
      <path d="M1835.400 124l-2 6c12 4 22 10 29 18l-5 7 17 .5V142l-5 2c-9-10-20-16-34-20z" />
      <path d="M1785 172h45l2 7 5 6 6 1v43l-6 2-5 5-2 7h-45l-2-7-5-5-6-2v-43l6-1 5-6z" />
    </g>
    <rect x="1779.500" y="179.500" width="56" height="56" rx="13" fill="#fff" />
    <path d="M1769.500 171.500v73.500" stroke="#35a035" strokeWidth="1.500" />
    <path d="M1769.500 245.500h73.500" stroke="#d9694a" strokeWidth="2" />
    <text x="1764.500" y="164.800" textLength="8.500" lengthAdjust="spacingAndGlyphs" fontFamily="Roboto, sans-serif" fontWeight="700" fontSize="16" fill="#3cab3c">Y</text>
    <text x="1851" y="251.500" textLength="9" lengthAdjust="spacingAndGlyphs" fontFamily="Roboto, sans-serif" fontWeight="700" fontSize="17" fill="#c8553a">X</text>
    <text x="1807.300" y="213.500" textAnchor="middle" fontFamily="'Noto Sans CJK TC', sans-serif" fontSize="14.500" fill="#333">上視</text>
    <g stroke="#3a3f45" strokeWidth="1.200" strokeLinejoin="round">
      <path d="M1852.500 282.500l11-3.500 11 3.500v15l-11 4.500-11-4.500z" fill="#fff" />
      <path d="M1852.500 282.500l11 4v15.500l-11-4.500z" fill="#a8a8a8" stroke="none" />
      <path d="M1874.500 282.500l-11 4v15.500l11-4.500z" fill="#d6d6d6" stroke="none" />
      <path d="M1852.500 282.500l11-3.500 11 3.500v15l-11 4.500-11-4.500z" fill="none" />
    </g>
    <path d="M1885 288h10l-5 5z" fill="#333a44" />
  </svg>
);

const ToolItem = ({ kind: Kind, gap, w }) => {
  if (Kind === "|") return <Divider $gap={gap} $w={w} />;
  if (Kind === "v") return <Tool $gap={gap} $w={12}><ChevronIcon /></Tool>;
  if (Kind === "label") return <ToolLabel>草圖</ToolLabel>;
  return <Tool $gap={gap} $w={w}><Kind /></Tool>;
};

const FeatureRow = ({ kind, label, n, hidden }) => {
  const Icon = FEATURE_ICONS[kind];
  const dim = kind === "sketch";
  return (
    <Row $dim={dim}>
      <IconSlot>
        <Icon s={20} dim={dim} />
        {hidden && <Minus />}
      </IconSlot>
      <span>{label} <Digits>{n}</Digits></span>
    </Row>
  );
};

const FeaturePanel = () => (
  <Panel>
    <FilterRow>
      <Funnel />
      <FilterInput><Placeholder>根據名稱或類型來篩選</Placeholder></FilterInput>
    </FilterRow>
    <HeadRow>
      <HeadTitle><span>特徵</span> (17)</HeadTitle>
      <HeadIcon><FolderPlus /></HeadIcon>
      <HeadIcon $gap={13}><Watch /></HeadIcon>
    </HeadRow>
    <TreeArea>
      <TreeList>
        <Row $indent={5} $gap={9}>
          <ChevronIcon w={15} c="#5b6068" sw={2.2} />
          <span>預設幾何</span>
        </Row>
        <Group>
          <Row $indent={17} $gap={5.5} $dim $latin><IconSlot><OriginIcon /></IconSlot>Origin</Row>
          {["Top", "Front", "Right"].map((n) => (
            <Row key={n} $indent={17} $gap={5.5} $dim $latin><IconSlot><Plane s={20} dim /></IconSlot>{n}</Row>
          ))}
        </Group>
        {FEATURES.map(([kind, label, n, hidden]) => (
          <FeatureRow key={label + n} kind={kind} label={label} n={n} hidden={hidden} />
        ))}
      </TreeList>
      <ScrollTrack>
        <Arrow $up />
        <ScrollThumb />
        <Arrow $mt={71} />
      </ScrollTrack>
    </TreeArea>
    <PartsArea>
      <Row $indent={5} $gap={9}>
        <ChevronIcon w={15} c="#5b6068" sw={2.2} />
        <span>零件 <Digits>(1)</Digits></span>
      </Row>
      <Row $indent={30} $gap={5} $latin><IconSlot><PartIcon /></IconSlot>Part 1</Row>
    </PartsArea>
  </Panel>
);

export default function App() {
  return (
    <Page>
      <GlobalStyle />
      <TopStrip />
      <Body>
        <Rail>
          <RailButton $h={44}><TreeIcon /></RailButton>
          <RailButton $h={44} $shift={-2}><InsertPoint /></RailButton>
          <RailButton $h={44}><Comment /></RailButton>
          <RailButton $h={43}><FastWatch /></RailButton>
          <RailRule />
          <RailButton $h={44} $shift={1}><Checklist /></RailButton>
          <RailButton $h={34} $push="auto"><ScreenSearch /></RailButton>
        </Rail>
        <Main>
          <Toolbar>
            {TOOLS.map(([kind, gap, w], i) => (
              <ToolItem key={i} kind={kind} gap={gap} w={w} />
            ))}
            <SearchBox>
              <SearchText>搜尋工具...</SearchText>
              <Key $w={41}>alt/⌥</Key>
              <Key $w={21}>c</Key>
            </SearchBox>
          </Toolbar>
          <Workspace>
            <FeaturePanel />
            <Viewport>
              <Model />
              <Flyout><FlyIcon /></Flyout>
              <CubeWrap><ViewCube /></CubeWrap>
              <SideDock>
                <DockButton><Swatches /></DockButton>
                <DockButton><GridCube /></DockButton>
                <DockButton><GridBraceCube /></DockButton>
                <DockButton><GridVar /></DockButton>
              </SideDock>
              <FloatStack>
                <RoundButton><Translate /></RoundButton>
                <RoundButton><Clover /></RoundButton>
                <Pill><Bot /></Pill>
              </FloatStack>
              <Measures><Tape /><Protractor /><Scales /></Measures>
            </Viewport>
          </Workspace>
          <TabBar>
            <AddTab><Plus /></AddTab>
            <Crumb $w={54} $pl={9} $bg="#e9e9e9"><Home /></Crumb>
            <Crumb $w={112} $ml={-11} $pl={22} $bg="#fff" $notch><Folder /><CrumbText>木板</CrumbText></Crumb>
            {TABS.map((t) => (
              <Tab key={t.name} $w={t.w} $gap={t.gap} $pl={t.pl} $active={t.active}>
                {t.kind === "studio" ? <StudioIcon /> : <DrawingIcon />}
                <TabText>{t.name}</TabText>
              </Tab>
            ))}
          </TabBar>
        </Main>
      </Body>
    </Page>
  );
}
